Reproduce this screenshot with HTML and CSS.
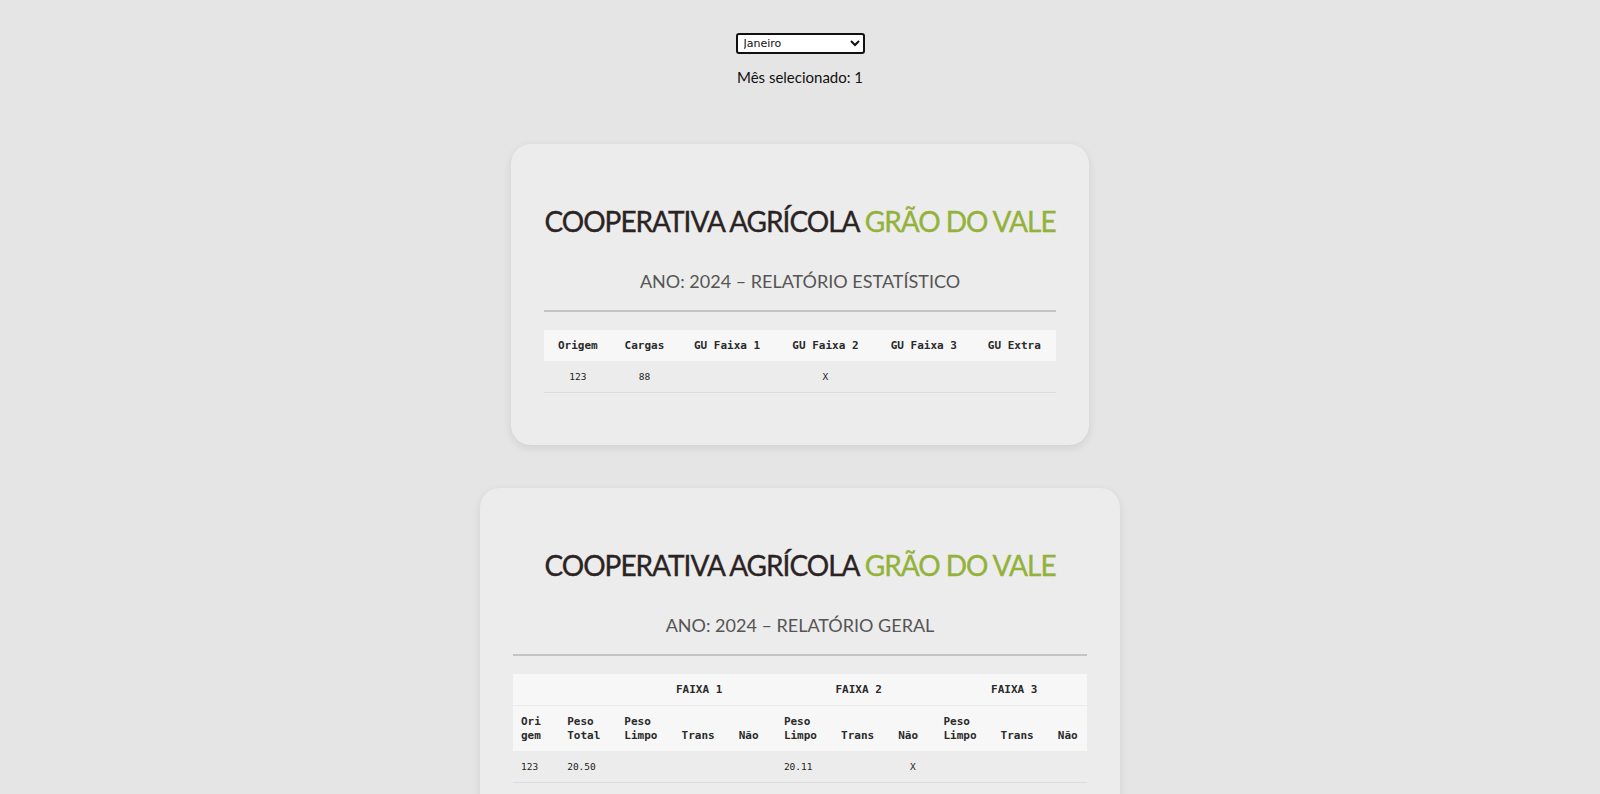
FILE: index.html
```html
<!DOCTYPE html>
<html lang="pt-BR">
<head>
<meta charset="utf-8">
<title>Relatórios</title>
<link rel="stylesheet" href="styles.css">
</head>
<body>
<div class="page">
  <div class="month-picker">
    <select class="month-select">
      <option selected>Janeiro</option>
      <option>Fevereiro</option>
      <option>Março</option>
      <option>Abril</option>
      <option>Maio</option>
      <option>Junho</option>
      <option>Julho</option>
      <option>Agosto</option>
      <option>Setembro</option>
      <option>Outubro</option>
      <option>Novembro</option>
      <option>Dezembro</option>
    </select>
    <p class="month-label">Mês selecionado: 1</p>
  </div>

  <div class="reports">
    <section class="report-card">
      <h1 class="report-title">COOPERATIVA AGRÍCOLA <span class="accent">GRÃO DO VALE</span></h1>
      <h2 class="report-subtitle">ANO: 2024 – RELATÓRIO ESTATÍSTICO</h2>
      <hr class="divider">
      <table class="data-table stats-table">
        <thead>
          <tr>
            <th>Origem</th>
            <th>Cargas</th>
            <th>GU Faixa 1</th>
            <th>GU Faixa 2</th>
            <th>GU Faixa 3</th>
            <th>GU Extra</th>
          </tr>
        </thead>
        <tbody>
          <tr>
            <td>123</td>
            <td>88</td>
            <td></td>
            <td>X</td>
            <td></td>
            <td></td>
          </tr>
        </tbody>
      </table>
    </section>

    <section class="report-card">
      <h1 class="report-title">COOPERATIVA AGRÍCOLA <span class="accent">GRÃO DO VALE</span></h1>
      <h2 class="report-subtitle">ANO: 2024 – RELATÓRIO GERAL</h2>
      <hr class="divider">
      <table class="data-table general-table">
        <colgroup>
          <col class="c-origem">
          <col class="c-peso">
          <col class="c-peso">
          <col class="c-trans">
          <col class="c-nao">
          <col class="c-peso">
          <col class="c-trans">
          <col class="c-nao">
          <col class="c-peso">
          <col class="c-trans">
          <col class="c-last">
        </colgroup>
        <thead>
          <tr class="group-row">
            <th colspan="2"></th>
            <th colspan="3">FAIXA 1</th>
            <th colspan="3">FAIXA 2</th>
            <th colspan="3">FAIXA 3</th>
          </tr>
          <tr class="label-row">
            <th>Ori<wbr>gem</th>
            <th>Peso Total</th>
            <th>Peso Limpo</th>
            <th>Trans</th>
            <th>Não</th>
            <th>Peso Limpo</th>
            <th>Trans</th>
            <th>Não</th>
            <th>Peso Limpo</th>
            <th>Trans</th>
            <th>Não</th>
          </tr>
        </thead>
        <tbody>
          <tr>
            <td>123</td>
            <td>20.50</td>
            <td></td>
            <td></td>
            <td></td>
            <td>20.11</td>
            <td></td>
            <td class="mark">X</td>
            <td></td>
            <td></td>
            <td></td>
          </tr>
        </tbody>
      </table>
    </section>
  </div>
</div>
</body>
</html>
```

FILE: styles.css
```css
* {
  box-sizing: border-box;
}

body {
  margin: 0;
  background: #e6e5e6;
  font-family: "Lato", "Open Sans", "DejaVu Sans", sans-serif;
  color: #1c1c1c;
}

.page {
  display: flex;
  flex-direction: column;
  align-items: center;
  padding-top: 33px;
}

.month-picker {
  display: flex;
  flex-direction: column;
  align-items: center;
}

.month-select {
  width: 129px;
  height: 21px;
  font-family: "DejaVu Sans", sans-serif;
  font-size: 11px;
  color: #111;
  background: #fff;
  border: 2px solid #111;
  border-radius: 3px;
  padding: 0 2px;
}

.month-label {
  margin: 14px 0 0;
  font-size: 15px;
  line-height: 19px;
  color: #111;
}

.reports {
  margin-top: 57px;
  display: flex;
  flex-direction: column;
  align-items: center;
  gap: 43px;
}

.report-card {
  width: fit-content;
  background: #ececec;
  border-radius: 20px;
  padding: 40px 33px 52px;
  box-shadow: 0 3px 10px rgba(0, 0, 0, 0.09);
}

.report-title {
  margin: 20px 0 0;
  font-size: 28px;
  line-height: 34px;
  font-weight: 400;
  text-align: center;
  white-space: nowrap;
  color: #2b2323;
  letter-spacing: -1px;
  -webkit-text-stroke: 0.35px currentColor;
}

.accent {
  color: #93b23a;
}

.report-subtitle {
  margin: 32px 0 0;
  font-size: 18px;
  line-height: 22px;
  font-weight: 400;
  text-align: center;
  color: #555;
}

.divider {
  margin: 18px 0 0;
  border: 0;
  height: 2px;
  background: #c4c4c4;
}

.data-table {
  margin-top: 18px;
  width: 100%;
  border-collapse: collapse;
  font-family: "DejaVu Sans Mono", "Liberation Mono", monospace;
}

.data-table th {
  background: #f7f7f7;
  font-size: 11px;
  line-height: 14px;
  font-weight: 700;
  color: #2a2a2a;
  padding: 9px 8px 8px;
}

.data-table td {
  font-size: 9.5px;
  line-height: 13px;
  color: #222;
  padding: 9px 8px;
  border-bottom: 1px solid #dcdcdc;
}

.stats-table th,
.stats-table td {
  text-align: center;
}

.general-table {
  width: 574px;
  table-layout: fixed;
}

.general-table th,
.general-table td {
  text-align: left;
  vertical-align: bottom;
}

.general-table .group-row th {
  text-align: center;
  padding-left: 14px;
  border-bottom: 1px solid #ebebeb;
}

.general-table td.mark {
  text-align: center;
}

.c-origem { width: 46px; }
.c-peso { width: 57px; }
.c-trans { width: 57px; }
.c-nao { width: 45px; }
.c-last { width: 37px; }
```
